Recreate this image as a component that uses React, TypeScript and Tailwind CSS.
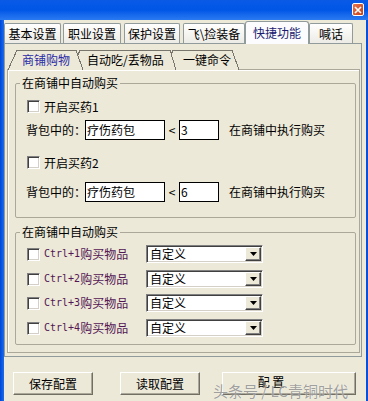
import React from "react";

const FONT = "font-['SimSun','Noto_Sans_CJK_SC',sans-serif]";

function Checkbox() {
  return (
    <div className="w-[13px] h-[13px] shrink-0 bg-white border border-t-[#808080] border-l-[#808080] border-b-white border-r-white shadow-[inset_1px_1px_0_#404040,inset_-1px_-1px_0_#D4D0C8]" />
  );
}

function OuterTab({ label, w, ml, selected }: { label: string; w: string; ml: string; selected?: boolean }) {
  if (selected) {
    return (
      <div
        className={`${w} ${ml} h-[23px] -mb-px relative z-10 flex items-center justify-center bg-[#FCFCFE] border border-b-0 border-[#919B9C] rounded-t-[3px] text-[#1A1A6E] text-[12px] leading-[12px] pb-[1px]`}
      >
        {label}
      </div>
    );
  }
  return (
    <div
      className={`${w} ${ml} h-[20px] flex items-center justify-center bg-gradient-to-b from-[#FFFFFF] to-[#ECEBE5] border border-b-0 border-[#919B9C] rounded-t-[2px] text-black text-[12px] leading-[12px]`}
    >
      {label}
    </div>
  );
}

function SubTab({
  label,
  w,
  pts,
  textLeft,
  selected,
  ml,
  z,
}: {
  label: string;
  w: number;
  pts: string;
  textLeft: string;
  selected?: boolean;
  ml: string;
  z: string;
}) {
  return (
    <div className={`relative h-[20px] ${ml} ${z}`} style={{ width: w }}>
      <svg className="absolute inset-0" width={w} height={20} viewBox={`0 0 ${w} 20`}>
        <polygon points={pts} fill="#ECE9D8" stroke="none" />
        <polyline points={pts} fill="none" stroke="#77756C" strokeWidth={1} shapeRendering="crispEdges" />
      </svg>
      <div
        className={`relative ${textLeft} pt-[4px] text-[12px] leading-[12px] whitespace-nowrap ${
          selected ? "text-[#2B2BA6]" : "text-black"
        }`}
      >
        {label}
      </div>
    </div>
  );
}

function TextBox({ value, w }: { value: string; w: string }) {
  return (
    <div className={`${w} h-[20px] bg-white border border-black flex items-center pl-[1px] text-[12px] leading-[12px]`}>
      {value}
    </div>
  );
}

function BuyRowVal({ v }: { v: string }) {
  return (
    <div className="flex items-center h-[20px]">
      <div className="ml-[10px] w-[59px] text-[12px] leading-[12px] whitespace-nowrap">背包中的：</div>
      <TextBox value="疗伤药包" w="w-[80px]" />
      <div className="w-[14px] text-center text-[12px] leading-[12px]">&lt;</div>
      <TextBox value={v} w="w-[40px]" />
      <div className="ml-[10px] text-[12px] leading-[12px] whitespace-nowrap">在商铺中执行购买</div>
    </div>
  );
}

function Select() {
  return (
    <div className="w-[117px] h-[18px] flex items-stretch bg-white border border-t-[#808080] border-l-[#808080] border-b-white border-r-white shadow-[inset_1px_1px_0_#404040,inset_-1px_-1px_0_#D4D0C8] p-[1px]">
      <div className="flex-1 flex items-center pl-[2px] text-[12px] leading-[12px]">自定义</div>
      <div className="w-[16px] flex items-center justify-center bg-[#ECE9D8] border border-t-white border-l-white border-b-[#404040] border-r-[#404040] shadow-[inset_-1px_-1px_0_#808080]">
        <svg width="7" height="4" viewBox="0 0 7 4">
          <polygon points="0,0 7,0 3.5,4" fill="#000" />
        </svg>
      </div>
    </div>
  );
}

function CtrlRow({ n, mt }: { n: number; mt: string }) {
  return (
    <div className={`flex items-center h-[18px] ${mt}`}>
      <div className="ml-[11px]">
        <Checkbox />
      </div>
      <div className="ml-[4px] w-[102px] flex items-center text-[#541654] whitespace-nowrap">
        <span className="font-['DejaVu_Sans_Mono',monospace] text-[10px] leading-[12px]">Ctrl+{n}</span>
        <span className="text-[12px] leading-[12px]">购买物品</span>
      </div>
      <Select />
    </div>
  );
}

function Button({ label, w, ml, extra }: { label: string; w: string; ml: string; extra?: string }) {
  return (
    <div
      className={`${w} ${ml} h-[23px] flex items-center justify-center bg-[#ECE9D8] border border-t-white border-l-white border-b-[#716F64] border-r-[#716F64] shadow-[inset_-1px_-1px_0_#ACA899] text-[12px] leading-[12px] ${extra ?? ""}`}
    >
      {label}
    </div>
  );
}

export default function App() {
  return (
    <div className={`w-[368px] h-[401px] bg-[#ECE9D8] flex flex-col overflow-hidden relative text-black ${FONT}`}>
      {/* title bar */}
      <div className="h-[20px] shrink-0 bg-gradient-to-b from-[#0A5AE6] via-[#0056E6] to-[#2A7AF2] flex items-start justify-end pt-[3px] pr-[4px]">
        <div className="w-[12px] h-[13px] rounded-[2px] border border-white bg-gradient-to-br from-[#E8744A] to-[#C2401A] flex items-center justify-center">
          <svg width="8" height="8" viewBox="0 0 8 8">
            <path d="M1 1 L7 7 M7 1 L1 7" stroke="#fff" strokeWidth="1.6" />
          </svg>
        </div>
      </div>

      <div className="flex flex-1">
        <div className="w-[4px] bg-gradient-to-r from-[#0046D8] to-[#1D6BEB]" />
        <div className="flex-1 flex flex-col">
          {/* outer tabs */}
          <div className="h-[23px] flex items-end">
            <OuterTab label="基本设置" w="w-[57px]" ml="ml-0" />
            <OuterTab label="职业设置" w="w-[58px]" ml="ml-[2px]" />
            <OuterTab label="保护设置" w="w-[56px]" ml="ml-[3px]" />
            <OuterTab label={"飞\\捡装备"} w="w-[62px]" ml="ml-[3px]" />
            <OuterTab label="快捷功能" w="w-[64px]" ml="ml-0" selected />
            <OuterTab label="喊话" w="w-[44px]" ml="ml-0" />
          </div>

          {/* outer panel */}
          <div className="w-[358px] h-[314px] border border-[#919B9C] flex flex-col">
            {/* sub tabs */}
            <div className="mt-[6px] h-[20px] -mb-px flex relative z-10">
              <SubTab
                label="商铺购物"
                w={75}
                pts="0,20 9,0 68,0 75,20"
                textLeft="left-[14px]"
                selected
                ml="ml-[3px]"
                z="z-30"
              />
              <SubTab
                label="自动吃/丢物品"
                w={104}
                pts="0,20 8,0 98,0 104,20"
                textLeft="left-[15px]"
                ml="ml-[-11px]"
                z="z-20"
              />
              <SubTab
                label="一键命令"
                w={74}
                pts="0,20 8,0 67,0 74,20"
                textLeft="left-[18px]"
                ml="ml-[-11px]"
                z="z-10"
              />
            </div>

            {/* inner panel */}
            <div className="ml-[2px] mr-[1px] h-[284px] border border-[#ACA899] shadow-[inset_1px_1px_0_#fff] flex flex-col">
              <fieldset className="mt-[7px] ml-[7px] mr-[3px] border border-[#ACA899] rounded-[2px] pb-[15px]">
                <legend className="ml-[4px] px-[2px] text-[12px] leading-[12px]">在商铺中自动购买</legend>
                <div className="mt-[11px] flex items-center h-[13px]">
                  <div className="ml-[11px]">
                    <Checkbox />
                  </div>
                  <div className="ml-[4px] text-[12px] leading-[12px]">开启买药1</div>
                </div>
                <div className="mt-[7px]">
                  <BuyRowVal v="3" />
                </div>
                <div className="mt-[16px] flex items-center h-[13px]">
                  <div className="ml-[11px]">
                    <Checkbox />
                  </div>
                  <div className="ml-[4px] text-[12px] leading-[12px]">开启买药2</div>
                </div>
                <div className="mt-[13px]">
                  <BuyRowVal v="6" />
                </div>
              </fieldset>

              <fieldset className="mt-[8px] ml-[7px] mr-[3px] border border-[#ACA899] rounded-[2px] pb-[7px]">
                <legend className="ml-[4px] px-[2px] text-[12px] leading-[12px]">在商铺中自动购买</legend>
                <CtrlRow n={1} mt="mt-[7px]" />
                <CtrlRow n={2} mt="mt-[7px]" />
                <CtrlRow n={3} mt="mt-[6px]" />
                <CtrlRow n={4} mt="mt-[7px]" />
              </fieldset>
            </div>
          </div>

          {/* buttons */}
          <div className="mt-[15px] flex">
            <Button label="保存配置" w="w-[80px]" ml="ml-[9px]" />
            <Button label="读取配置" w="w-[80px]" ml="ml-[27px]" />
            <Button label="配 置" w="w-[134px]" ml="ml-[22px]" extra="pr-[36px] pb-[3px] whitespace-pre" />
          </div>
        </div>
        <div className="w-[2px] bg-[#0A4FD8]" />
      </div>

      {/* watermark */}
      <div className="absolute left-[213px] top-[383px] text-[15px] leading-[16px] whitespace-nowrap text-[rgba(105,105,105,0.65)] [text-shadow:0_0_1px_#fff]">
        头条号 / LC青铜时代
      </div>
    </div>
  );
}
